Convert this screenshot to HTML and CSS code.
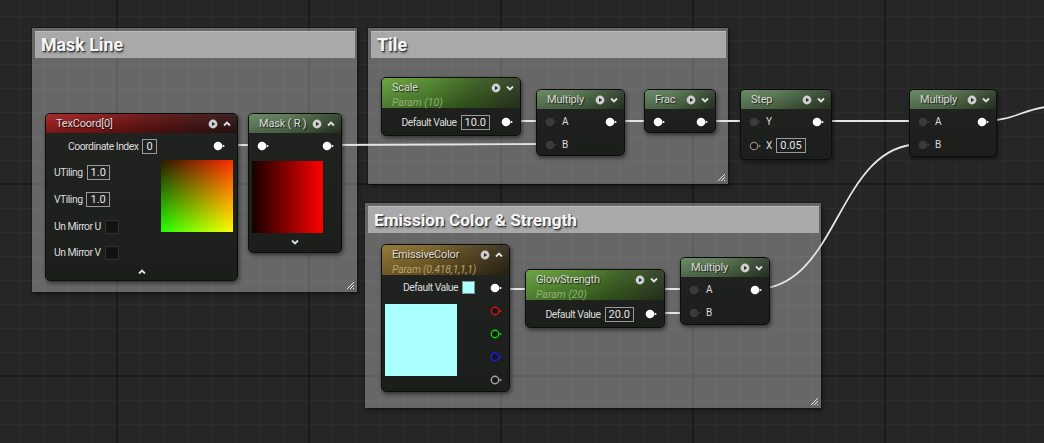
FILE: index.html
```html
<!DOCTYPE html>
<html>
<head>
<meta charset="utf-8">
<link rel="stylesheet" href="styles.css">
</head>
<body>
<div class="graph">

  <div class="comment c-mask">
    <div class="comment-title">Mask Line</div>
    <svg class="grip" viewBox="0 0 10 10"><path d="M9 2 L2 9 M9 5 L5 9 M9 8 L8 9" stroke="#e6e6e6" stroke-width="1"/></svg>
  </div>
  <div class="comment c-tile">
    <div class="comment-title">Tile</div>
    <svg class="grip" viewBox="0 0 10 10"><path d="M9 2 L2 9 M9 5 L5 9 M9 8 L8 9" stroke="#e6e6e6" stroke-width="1"/></svg>
  </div>
  <div class="comment c-emis">
    <div class="comment-title">Emission Color &amp; Strength</div>
    <svg class="grip" viewBox="0 0 10 10"><path d="M9 2 L2 9 M9 5 L5 9 M9 8 L8 9" stroke="#e6e6e6" stroke-width="1"/></svg>
  </div>

  <svg class="wires" width="1044" height="443" viewBox="0 0 1044 443">
    <g fill="none" stroke="#e4e4e4" stroke-width="1.8">
      <path d="M222 145 L261 145"/>
      <path d="M328 145 C420 145 460 144 549 144"/>
      <path d="M507 121 L549 121"/>
      <path d="M611 121 L657 121"/>
      <path d="M703 121 L753 121"/>
      <path d="M819 121 L921 121"/>
      <path d="M984 121 C1012 121 1022 110 1046 107"/>
      <path d="M755 289 C840 289 836 144 921 144"/>
      <path d="M495 289 L693 289"/>
      <path d="M652 313 L693 313"/>
    </g>
  </svg>

  <!-- TexCoord -->
  <div class="node n-texcoord">
    <div class="head h-red">
      <span class="title">TexCoord[0]</span>
      <svg class="ico" viewBox="0 0 10 10"><circle cx="5" cy="5" r="4.4" fill="#cfcfcf"/><path d="M4 2.9 L7.2 5 L4 7.1 Z" fill="#2a2a2a"/></svg>
      <svg class="chev" viewBox="0 0 10 10"><path d="M2 6.5 L5 3.5 L8 6.5" stroke="#e0e0e0" stroke-width="1.8" fill="none"/></svg>
    </div>
    <div class="tc-row1">
      <span class="lbl">Coordinate Index</span>
      <span class="box">0</span>
      <span class="grow"></span>
      <svg class="pin" viewBox="0 0 13 10"><circle cx="5" cy="5" r="4.3" fill="#fff"/><path d="M9.6 3.4 L12 5 L9.6 6.6 Z" fill="#fff"/></svg>
    </div>
    <div class="tc-main">
      <div class="tc-props">
        <div class="prow"><span class="lbl">UTiling</span><span class="box">1.0</span></div>
        <div class="prow"><span class="lbl">VTiling</span><span class="box">1.0</span></div>
        <div class="prow"><span class="lbl">Un Mirror U</span><span class="check"></span></div>
        <div class="prow prow-last"><span class="lbl">Un Mirror V</span><span class="check"></span></div>
      </div>
      <div class="prev-uv"></div>
    </div>
    <div class="collapse"><svg class="chev" viewBox="0 0 10 10"><path d="M2 6.5 L5 3.5 L8 6.5" stroke="#e0e0e0" stroke-width="1.8" fill="none"/></svg></div>
  </div>

  <!-- Mask (R) -->
  <div class="node n-maskr">
    <div class="head h-gray">
      <span class="title">Mask ( R )</span>
      <svg class="ico" viewBox="0 0 10 10"><circle cx="5" cy="5" r="4.4" fill="#cfcfcf"/><path d="M4 2.9 L7.2 5 L4 7.1 Z" fill="#2a2a2a"/></svg>
      <svg class="chev" viewBox="0 0 10 10"><path d="M2 6.5 L5 3.5 L8 6.5" stroke="#e0e0e0" stroke-width="1.8" fill="none"/></svg>
    </div>
    <div class="row r-mask">
      <svg class="pin" viewBox="0 0 13 10"><circle cx="5" cy="5" r="4.3" fill="#fff"/><path d="M9.6 3.4 L12 5 L9.6 6.6 Z" fill="#fff"/></svg>
      <span class="grow"></span>
      <svg class="pin" viewBox="0 0 13 10"><circle cx="5" cy="5" r="4.3" fill="#fff"/><path d="M9.6 3.4 L12 5 L9.6 6.6 Z" fill="#fff"/></svg>
    </div>
    <div class="prev-red"></div>
    <div class="collapse c-mask-chev"><svg class="chev" viewBox="0 0 10 10"><path d="M2 3.5 L5 6.5 L8 3.5" stroke="#e0e0e0" stroke-width="1.8" fill="none"/></svg></div>
  </div>

  <!-- Scale -->
  <div class="node n-scale">
    <div class="head head2 h-green">
      <span class="title2"><span class="title">Scale</span><span class="sub sub-green">Param (10)</span></span>
      <svg class="ico" viewBox="0 0 10 10"><circle cx="5" cy="5" r="4.4" fill="#cfcfcf"/><path d="M4 2.9 L7.2 5 L4 7.1 Z" fill="#2a2a2a"/></svg>
      <svg class="chev" viewBox="0 0 10 10"><path d="M2 3.5 L5 6.5 L8 3.5" stroke="#e0e0e0" stroke-width="1.8" fill="none"/></svg>
    </div>
    <div class="row r-param">
      <span class="grow"></span>
      <span class="lbl">Default Value</span>
      <span class="box">10.0</span>
      <svg class="pin pin-out" viewBox="0 0 13 10"><circle cx="5" cy="5" r="4.3" fill="#fff"/><path d="M9.6 3.4 L12 5 L9.6 6.6 Z" fill="#fff"/></svg>
    </div>
  </div>

  <!-- Multiply (Tile) -->
  <div class="node n-mul1">
    <div class="head h-gray">
      <span class="title">Multiply</span>
      <svg class="ico" viewBox="0 0 10 10"><circle cx="5" cy="5" r="4.4" fill="#cfcfcf"/><path d="M4 2.9 L7.2 5 L4 7.1 Z" fill="#2a2a2a"/></svg>
      <svg class="chev" viewBox="0 0 10 10"><path d="M2 3.5 L5 6.5 L8 3.5" stroke="#e0e0e0" stroke-width="1.8" fill="none"/></svg>
    </div>
    <div class="body">
      <div class="row">
        <svg class="pin" viewBox="0 0 13 10"><circle cx="5" cy="5" r="4.3" fill="#3b3b3b"/><path d="M9.6 3.4 L12 5 L9.6 6.6 Z" fill="#3b3b3b"/></svg>
        <span class="plbl">A</span><span class="grow"></span>
        <svg class="pin" viewBox="0 0 13 10"><circle cx="5" cy="5" r="4.3" fill="#fff"/><path d="M9.6 3.4 L12 5 L9.6 6.6 Z" fill="#fff"/></svg>
      </div>
      <div class="row">
        <svg class="pin" viewBox="0 0 13 10"><circle cx="5" cy="5" r="4.3" fill="#3b3b3b"/><path d="M9.6 3.4 L12 5 L9.6 6.6 Z" fill="#3b3b3b"/></svg>
        <span class="plbl">B</span>
      </div>
    </div>
  </div>

  <!-- Frac -->
  <div class="node n-frac">
    <div class="head h-gray">
      <span class="title">Frac</span>
      <svg class="ico" viewBox="0 0 10 10"><circle cx="5" cy="5" r="4.4" fill="#cfcfcf"/><path d="M4 2.9 L7.2 5 L4 7.1 Z" fill="#2a2a2a"/></svg>
      <svg class="chev" viewBox="0 0 10 10"><path d="M2 3.5 L5 6.5 L8 3.5" stroke="#e0e0e0" stroke-width="1.8" fill="none"/></svg>
    </div>
    <div class="body">
      <div class="row">
        <svg class="pin" viewBox="0 0 13 10"><circle cx="5" cy="5" r="4.3" fill="#fff"/><path d="M9.6 3.4 L12 5 L9.6 6.6 Z" fill="#fff"/></svg>
        <span class="grow"></span>
        <svg class="pin" viewBox="0 0 13 10"><circle cx="5" cy="5" r="4.3" fill="#fff"/><path d="M9.6 3.4 L12 5 L9.6 6.6 Z" fill="#fff"/></svg>
      </div>
    </div>
  </div>

  <!-- Step -->
  <div class="node n-step">
    <div class="head h-gray">
      <span class="title">Step</span>
      <svg class="ico" viewBox="0 0 10 10"><circle cx="5" cy="5" r="4.4" fill="#cfcfcf"/><path d="M4 2.9 L7.2 5 L4 7.1 Z" fill="#2a2a2a"/></svg>
      <svg class="chev" viewBox="0 0 10 10"><path d="M2 3.5 L5 6.5 L8 3.5" stroke="#e0e0e0" stroke-width="1.8" fill="none"/></svg>
    </div>
    <div class="body">
      <div class="row">
        <svg class="pin" viewBox="0 0 13 10"><circle cx="5" cy="5" r="4.3" fill="#3b3b3b"/><path d="M9.6 3.4 L12 5 L9.6 6.6 Z" fill="#3b3b3b"/></svg>
        <span class="plbl">Y</span><span class="grow"></span>
        <svg class="pin" viewBox="0 0 13 10"><circle cx="5" cy="5" r="4.3" fill="#fff"/><path d="M9.6 3.4 L12 5 L9.6 6.6 Z" fill="#fff"/></svg>
      </div>
      <div class="row row-tall">
        <svg class="pin" viewBox="0 0 13 10"><circle cx="5" cy="5" r="3.7" fill="#151515" stroke="#8a8a8a" stroke-width="1.2"/><path d="M9.6 3.4 L12 5 L9.6 6.6 Z" fill="#8a8a8a"/></svg>
        <span class="plbl">X</span><span class="box box-x">0.05</span>
      </div>
    </div>
  </div>

  <!-- Multiply (right) -->
  <div class="node n-mul2">
    <div class="head h-gray">
      <span class="title">Multiply</span>
      <svg class="ico" viewBox="0 0 10 10"><circle cx="5" cy="5" r="4.4" fill="#cfcfcf"/><path d="M4 2.9 L7.2 5 L4 7.1 Z" fill="#2a2a2a"/></svg>
      <svg class="chev" viewBox="0 0 10 10"><path d="M2 3.5 L5 6.5 L8 3.5" stroke="#e0e0e0" stroke-width="1.8" fill="none"/></svg>
    </div>
    <div class="body">
      <div class="row">
        <svg class="pin" viewBox="0 0 13 10"><circle cx="5" cy="5" r="4.3" fill="#3b3b3b"/><path d="M9.6 3.4 L12 5 L9.6 6.6 Z" fill="#3b3b3b"/></svg>
        <span class="plbl">A</span><span class="grow"></span>
        <svg class="pin" viewBox="0 0 13 10"><circle cx="5" cy="5" r="4.3" fill="#fff"/><path d="M9.6 3.4 L12 5 L9.6 6.6 Z" fill="#fff"/></svg>
      </div>
      <div class="row">
        <svg class="pin" viewBox="0 0 13 10"><circle cx="5" cy="5" r="4.3" fill="#3b3b3b"/><path d="M9.6 3.4 L12 5 L9.6 6.6 Z" fill="#3b3b3b"/></svg>
        <span class="plbl">B</span>
      </div>
    </div>
  </div>

  <!-- EmissiveColor -->
  <div class="node n-emis">
    <div class="head head2 h-gold">
      <span class="title2"><span class="title">EmissiveColor</span><span class="sub sub-gold">Param (0.418,1,1,1)</span></span>
      <svg class="ico" viewBox="0 0 10 10"><circle cx="5" cy="5" r="4.4" fill="#cfcfcf"/><path d="M4 2.9 L7.2 5 L4 7.1 Z" fill="#2a2a2a"/></svg>
      <svg class="chev" viewBox="0 0 10 10"><path d="M2 6.5 L5 3.5 L8 6.5" stroke="#e0e0e0" stroke-width="1.8" fill="none"/></svg>
    </div>
    <div class="body">
      <div class="row">
        <span class="grow"></span>
        <span class="lbl">Default Value</span>
        <span class="swatch-sm"></span>
        <svg class="pin pin-out2" viewBox="0 0 13 10"><circle cx="5" cy="5" r="4.3" fill="#fff"/><path d="M9.6 3.4 L12 5 L9.6 6.6 Z" fill="#fff"/></svg>
      </div>
      <div class="emis-main">
        <div class="swatch-lg"></div>
        <div class="emis-pins">
          <div class="row"><svg class="pin" viewBox="0 0 13 10"><circle cx="5" cy="5" r="3.7" fill="#151515" stroke="#e01010" stroke-width="1.4"/><path d="M9.6 3.4 L12 5 L9.6 6.6 Z" fill="#e01010"/></svg></div>
          <div class="row"><svg class="pin" viewBox="0 0 13 10"><circle cx="5" cy="5" r="3.7" fill="#151515" stroke="#10d010" stroke-width="1.4"/><path d="M9.6 3.4 L12 5 L9.6 6.6 Z" fill="#10d010"/></svg></div>
          <div class="row"><svg class="pin" viewBox="0 0 13 10"><circle cx="5" cy="5" r="3.7" fill="#151515" stroke="#1a1aff" stroke-width="1.4"/><path d="M9.6 3.4 L12 5 L9.6 6.6 Z" fill="#1a1aff"/></svg></div>
          <div class="row"><svg class="pin" viewBox="0 0 13 10"><circle cx="5" cy="5" r="3.7" fill="#151515" stroke="#a8a8a8" stroke-width="1.4"/><path d="M9.6 3.4 L12 5 L9.6 6.6 Z" fill="#a8a8a8"/></svg></div>
        </div>
      </div>
    </div>
  </div>

  <!-- GlowStrength -->
  <div class="node n-glow">
    <div class="head head2 h-green">
      <span class="title2"><span class="title">GlowStrength</span><span class="sub sub-green">Param (20)</span></span>
      <svg class="ico" viewBox="0 0 10 10"><circle cx="5" cy="5" r="4.4" fill="#cfcfcf"/><path d="M4 2.9 L7.2 5 L4 7.1 Z" fill="#2a2a2a"/></svg>
      <svg class="chev" viewBox="0 0 10 10"><path d="M2 3.5 L5 6.5 L8 3.5" stroke="#e0e0e0" stroke-width="1.8" fill="none"/></svg>
    </div>
    <div class="row r-param">
      <span class="grow"></span>
      <span class="lbl">Default Value</span>
      <span class="box">20.0</span>
      <svg class="pin pin-out" viewBox="0 0 13 10"><circle cx="5" cy="5" r="4.3" fill="#fff"/><path d="M9.6 3.4 L12 5 L9.6 6.6 Z" fill="#fff"/></svg>
    </div>
  </div>

  <!-- Multiply (emission) -->
  <div class="node n-mul3">
    <div class="head h-gray">
      <span class="title">Multiply</span>
      <svg class="ico" viewBox="0 0 10 10"><circle cx="5" cy="5" r="4.4" fill="#cfcfcf"/><path d="M4 2.9 L7.2 5 L4 7.1 Z" fill="#2a2a2a"/></svg>
      <svg class="chev" viewBox="0 0 10 10"><path d="M2 3.5 L5 6.5 L8 3.5" stroke="#e0e0e0" stroke-width="1.8" fill="none"/></svg>
    </div>
    <div class="body">
      <div class="row">
        <svg class="pin" viewBox="0 0 13 10"><circle cx="5" cy="5" r="4.3" fill="#3b3b3b"/><path d="M9.6 3.4 L12 5 L9.6 6.6 Z" fill="#3b3b3b"/></svg>
        <span class="plbl">A</span><span class="grow"></span>
        <svg class="pin" viewBox="0 0 13 10"><circle cx="5" cy="5" r="4.3" fill="#fff"/><path d="M9.6 3.4 L12 5 L9.6 6.6 Z" fill="#fff"/></svg>
      </div>
      <div class="row">
        <svg class="pin" viewBox="0 0 13 10"><circle cx="5" cy="5" r="4.3" fill="#3b3b3b"/><path d="M9.6 3.4 L12 5 L9.6 6.6 Z" fill="#3b3b3b"/></svg>
        <span class="plbl">B</span>
      </div>
    </div>
  </div>

</div>
</body>
</html>
```

FILE: styles.css
```css
* { box-sizing: border-box; }
html, body { margin: 0; padding: 0; background: #262626; }
body { font-family: Roboto, "Liberation Sans", sans-serif; }

.graph {
  position: relative;
  width: 1044px;
  height: 443px;
  overflow: hidden;
  background-color: #262626;
  background-image:
    linear-gradient(to right, #1a1a1a 2px, transparent 2px),
    linear-gradient(to bottom, #1a1a1a 2px, transparent 2px),
    linear-gradient(to right, #2d2d2d 1px, transparent 1px),
    linear-gradient(to bottom, #2d2d2d 1px, transparent 1px);
  background-size: 192px 192px, 192px 192px, 24px 24px, 24px 24px;
  background-position: 116px 0, 0 183px, 20px 0, 0 16px;
}

/* ---------- comment boxes ---------- */
.comment {
  position: absolute;
  background: rgba(255, 255, 255, 0.30);
  box-shadow: 0 0 0 1px rgba(0,0,0,0.25), 2px 3px 4px rgba(0,0,0,0.35);
  padding: 3px 2px 0 3px;
}
.comment-title {
  height: 27px;
  background: #a9a9a9;
  border-top: 1px solid #bcbcbc;
  color: #f6f6f6;
  font-weight: 700;
  font-size: 17.8px;
  line-height: 26px;
  padding-left: 6px;
  text-shadow: 1px 1px 0 #3c3c3c, 1px 2px 2px rgba(0,0,0,0.45);
  white-space: nowrap;
}
.grip {
  position: absolute;
  right: 2px;
  bottom: 2px;
  width: 10px;
  height: 10px;
}
.c-mask { left: 32px; top: 28px; width: 325px; height: 264px; }
.c-tile { left: 368px; top: 28px; width: 360px; height: 156px; }
.c-emis { left: 365px; top: 203px; width: 456px; height: 205px; }
.c-emis .comment-title { font-size: 17.2px; }

.wires { position: absolute; left: 0; top: 0; }

/* ---------- nodes ---------- */
.node {
  position: absolute;
  background: linear-gradient(to bottom, #212321, #1c1e1c);
  border: 1px solid #0c0c0c;
  border-radius: 5px;
  box-shadow: 1px 2px 4px rgba(0,0,0,0.55);
  color: #e2e2e2;
  font-size: 10px;
}
.head {
  height: 19px;
  display: flex;
  align-items: center;
  gap: 4px;
  padding: 0 5px 0 10px;
  border-radius: 4px 4px 0 0;
  position: relative;
}
.head::after {
  content: "";
  position: absolute;
  inset: 0;
  border-radius: 4px 4px 0 0;
  background: linear-gradient(to bottom, rgba(255,255,255,0.06), rgba(0,0,0,0.22));
  pointer-events: none;
}
.head2 { height: 30px; align-items: flex-start; padding-top: 3px; }
.head2 .ico, .head2 .chev { margin-top: 2px; }
.title {
  flex: 1;
  font-size: 11px;
  letter-spacing: -0.2px;
  color: #dadada;
  text-shadow: 1px 1px 1px rgba(0,0,0,0.7);
  white-space: nowrap;
  position: relative;
  z-index: 1;
}
.title2 { flex: 1; display: flex; flex-direction: column; position: relative; z-index: 1; }
.sub { font-size: 10.5px; font-style: italic; margin-top: 2px; white-space: nowrap; }
.sub-green { color: #8fae76; }
.sub-gold { color: #b7a06c; letter-spacing: -0.2px; }
.ico { width: 10px; height: 10px; flex: none; position: relative; z-index: 1; }
.chev { width: 10px; height: 10px; flex: none; position: relative; z-index: 1; }

.h-red { background: linear-gradient(100deg, #a11f1f 0%, #7e1414 35%, #5a1010 60%, #2e1515 100%); }
.h-gray { background: linear-gradient(100deg, #64855e 0%, #587652 40%, #46603f 65%, #2f3b2c 100%); }
.h-green { background: linear-gradient(100deg, #66a03c 0%, #4f862b 35%, #3c6420 60%, #2b3a22 100%); }
.h-gold { background: linear-gradient(100deg, #8f7430 0%, #7a6226 35%, #5c4a1e 60%, #2e281a 100%); }

.body { padding: 1px 0; }
.row {
  height: 23px;
  display: flex;
  align-items: center;
  padding: 0 6px 0 8px;
}
.row-tall { height: 25px; }
.grow { flex: 1; }
.pin { width: 13px; height: 10px; flex: none; }
.plbl { margin-left: 4px; font-size: 10px; color: #dcdcdc; }
.lbl { color: #dcdcdc; font-size: 10.4px; letter-spacing: -0.5px; white-space: nowrap; }
.box {
  display: inline-block;
  border: 1px solid #9a9a9a;
  height: 15px;
  line-height: 13px;
  padding: 0 3px;
  font-size: 11px;
  color: #e6e6e6;
  margin-left: 4px;
}
.box-x { margin-left: 4px; }
.check {
  display: inline-block;
  width: 14px;
  height: 14px;
  background: #121212;
  border: 1px solid #303030;
  margin-left: 4px;
}

/* TexCoord */
.n-texcoord { left: 45px; top: 113px; width: 193px; height: 168px; }
.tc-row1 {
  height: 26px;
  display: flex;
  align-items: center;
  padding: 0 11px 0 22px;
}
.tc-main { display: flex; padding-right: 4px; }
.tc-props { flex: 1; padding-left: 8px; }
.prow { height: 27px; display: flex; align-items: center; }
.prow-last { height: 25px; }
.prev-uv {
  width: 72px;
  height: 72px;
  margin-top: 1px;
  background:
    linear-gradient(to right, #000, #ff1500),
    linear-gradient(to bottom, #2a1a00, #22ff00);
  background-blend-mode: screen;
}
.collapse { height: 14px; display: flex; justify-content: center; align-items: center; }

/* Mask R */
.n-maskr { left: 248px; top: 113px; width: 94px; height: 140px; }
.r-mask { height: 24px; padding: 1px 6px 0 8px; }
.prev-red {
  width: 71px;
  height: 72px;
  margin: 4px 0 0 3px;
  background: linear-gradient(to right, #150000, #ff0000);
}
.c-mask-chev { height: 18px; }

/* Params */
.n-scale { left: 381px; top: 77px; width: 140px; height: 59px; }
.n-glow { left: 525px; top: 269px; width: 140px; height: 59px; }
.r-param { height: 28px; padding: 0 6px 0 8px; }
.r-param .box { margin-right: 11px; }

/* math nodes */
.n-mul1 { left: 536px; top: 89px; width: 89px; height: 67px; }
.n-frac { left: 644px; top: 89px; width: 72px; height: 44px; }
.n-step { left: 740px; top: 89px; width: 92px; height: 71px; }
.n-mul2 { left: 909px; top: 89px; width: 88px; height: 68px; }
.n-mul3 { left: 680px; top: 257px; width: 90px; height: 68px; }

/* Emissive */
.n-emis { left: 381px; top: 244px; width: 129px; height: 148px; }
.swatch-sm {
  width: 13px;
  height: 13px;
  background: #b0ffff;
  border: 1px solid #7a9a9a;
  margin: 0 15px 0 4px;
}
.emis-main { display: flex; }
.swatch-lg {
  width: 72px;
  height: 72px;
  margin: 5px 0 0 3px;
  background: #aaffff;
}
.emis-pins { flex: 1; display: flex; flex-direction: column; align-items: flex-end; }
.emis-pins .row { padding: 0 6px 0 0; }
```
